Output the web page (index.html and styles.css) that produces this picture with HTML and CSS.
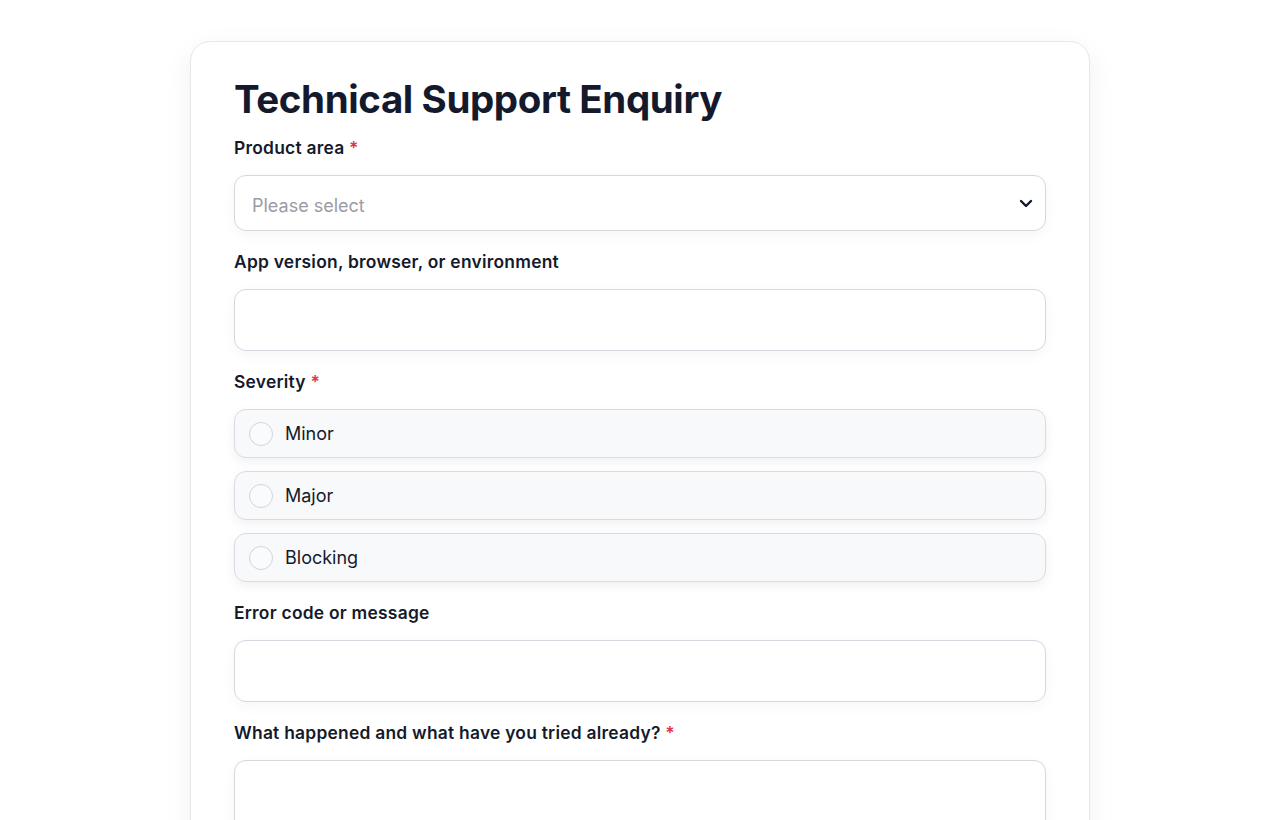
FILE: index.html
```html
<!DOCTYPE html>
<html lang="en">
<head>
    <meta charset="UTF-8">
    <meta name="viewport" content="width=device-width, initial-scale=1.0">
    <title>Technical Support Enquiry</title>
    <link rel="stylesheet" href="styles.css">
</head>
<body>

<div class="card">
    <h1>Technical Support Enquiry</h1>

    <form>
        <div class="field">
            <label class="label" for="area">Product area <span class="req">*</span></label>
            <div class="select-wrap">
                <select id="area" class="control select">
                    <option>Please select</option>
                </select>
                <svg class="chevron" width="16" height="16" viewBox="0 0 16 16" fill="none">
                    <path d="M3 6l5 5 5-5" stroke="#111827" stroke-width="2.4" stroke-linecap="round" stroke-linejoin="round"/>
                </svg>
            </div>
        </div>

        <div class="field">
            <label class="label" for="env">App version, browser, or environment</label>
            <input id="env" type="text" class="control input">
        </div>

        <div class="field">
            <span class="label">Severity <span class="req">*</span></span>
            <div class="radios">
                <label class="radio"><input type="radio" name="severity"><span class="dot"></span>Minor</label>
                <label class="radio"><input type="radio" name="severity"><span class="dot"></span>Major</label>
                <label class="radio"><input type="radio" name="severity"><span class="dot"></span>Blocking</label>
            </div>
        </div>

        <div class="field">
            <label class="label" for="code">Error code or message</label>
            <input id="code" type="text" class="control input">
        </div>

        <div class="field">
            <label class="label" for="what">What happened and what have you tried already? <span class="req">*</span></label>
            <textarea id="what" class="control textarea"></textarea>
        </div>
    </form>
</div>

</body>
</html>
```

FILE: styles.css
```css
body {
    font-family: Inter, "Noto Sans", sans-serif;
    background-color: #ffffff;
    color: #141a2b;
    margin: 0;
    padding: 41px 0 40px;
}
.card {
    box-sizing: border-box;
    width: 900px;
    margin: 0 auto;
    background: #fff;
    border: 1px solid #e6e7eb;
    border-radius: 20px;
    padding: 33px 43px 40px;
    box-shadow: 0 8px 30px rgba(17, 24, 39, 0.06);
}
h1 {
    font-size: 38.5px;
    font-weight: 700;
    letter-spacing: -0.4px;
    line-height: 48px;
    margin: 0 0 14px;
    color: #141a2b;
}
.field {
    margin-bottom: 20px;
}
.label {
    display: block;
    font-size: 17.4px;
    font-weight: 600;
    letter-spacing: 0.25px;
    line-height: 22px;
    margin-bottom: 16px;
    color: #141a2b;
}
.req {
    color: #e0344b;
}
.control {
    box-sizing: border-box;
    width: 100%;
    border: 1px solid #d5d7de;
    border-radius: 12px;
    background: #fff;
    font-family: inherit;
    font-size: 18px;
    color: #141a2b;
    box-shadow: 0 4px 14px rgba(17, 24, 39, 0.04);
}
.select-wrap {
    position: relative;
}
.select {
    appearance: none;
    height: 56px;
    padding: 4px 50px 0 17px;
    color: #9a9ca5;
}
.chevron {
    position: absolute;
    right: 12px;
    top: 20px;
    pointer-events: none;
}
.input {
    height: 62px;
    padding: 0 17px;
}
.textarea {
    height: 140px;
    padding: 14px 17px;
    resize: vertical;
}
.radios {
    display: flex;
    flex-direction: column;
    gap: 13px;
}
.radio {
    display: flex;
    align-items: center;
    box-sizing: border-box;
    height: 49px;
    padding: 0 14px;
    border: 1px solid #d8dbe2;
    border-radius: 12px;
    background: #f8f9fb;
    font-size: 18px;
    box-shadow: 0 4px 12px rgba(17, 24, 39, 0.06);
    cursor: pointer;
}
.radio input {
    display: none;
}
.dot {
    box-sizing: border-box;
    width: 24px;
    height: 24px;
    border: 1px solid #d1d4db;
    border-radius: 50%;
    background: #fafbfc;
    margin-right: 12px;
}
```
